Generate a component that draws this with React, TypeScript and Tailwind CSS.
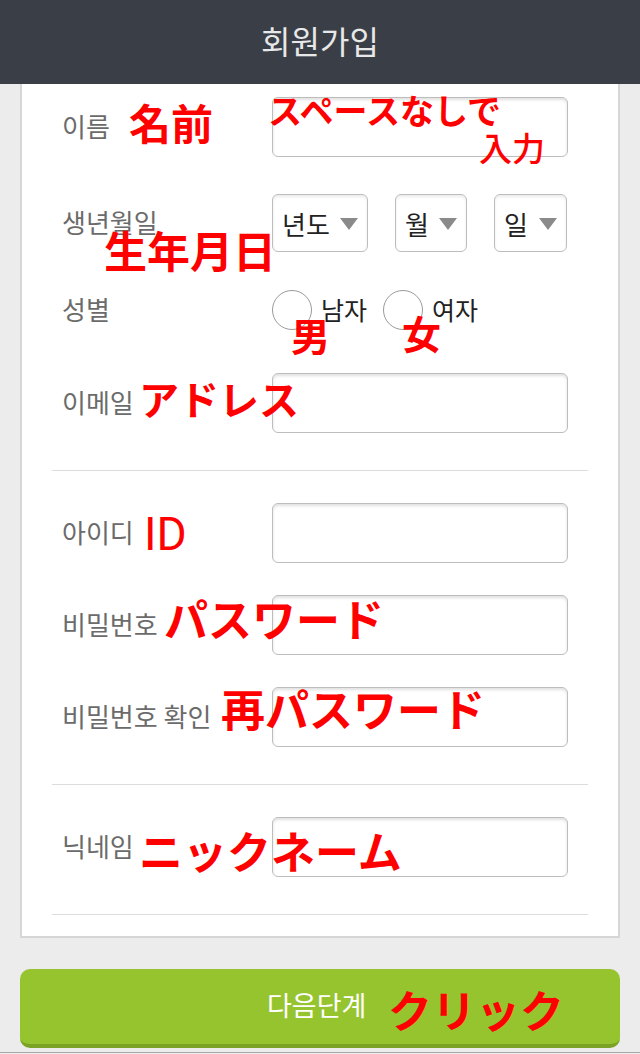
import React from 'react'

const kr = { fontFamily: '"Noto Sans CJK KR", "Noto Sans", sans-serif' }
const jp = { fontFamily: '"Noto Sans CJK JP", sans-serif' }

function Field() {
  return (
    <div className="h-[60px] w-[296px] rounded-md border border-[#bdbdbd] bg-white shadow-[inset_0_2px_3px_rgba(0,0,0,0.12)]" />
  )
}

function Select({ label, w }: { label: string; w: string }) {
  return (
    <div className={`${w} h-[58px] flex items-center justify-between pl-[9px] pr-[9px] rounded-md border border-[#bdbdbd] bg-white shadow-[inset_0_2px_3px_rgba(0,0,0,0.08)]`}>
      <span className="text-[26px] text-[#222]">{label}</span>
      <svg width="18" height="13" viewBox="0 0 18 13"><path d="M0 1h18L9 13z" fill="#8a8a8a" /></svg>
    </div>
  )
}

function Row({ label, children, h = 'h-[60px]' }: { label: string; children: React.ReactNode; h?: string }) {
  return (
    <div className={`${h} flex items-center pl-10`}>
      <div className="w-[210px] text-[26px] leading-none text-[#6b6b6b] whitespace-nowrap -mt-[2px]">{label}</div>
      {children}
    </div>
  )
}

function Radio({ label, w }: { label: string; w: string }) {
  return (
    <div className={`${w} flex items-center`}>
      <div className="w-10 h-10 shrink-0 rounded-full border border-[#9a9a9a] bg-white" />
      <span className="ml-[9px] -mt-[2px] text-[25px] leading-none text-[#222]">{label}</span>
    </div>
  )
}

function Divider() {
  return <div className="mx-[30px] h-px bg-[#dcdcdc]" />
}

// red hand annotations laid over the form
const notes: { t: string; x: number; y: number; s: string; w?: string }[] = [
  { t: '名前', x: 129, y: 101, s: 'text-[42px]' },
  { t: 'スペースなしで', x: 268, y: 93, s: 'text-[34px]' },
  { t: '入力', x: 479, y: 131, s: 'text-[33px]', w: 'font-medium' },
  { t: '生年月日', x: 104, y: 228, s: 'text-[43px]' },
  { t: '男', x: 291, y: 315, s: 'text-[39px]' },
  { t: '女', x: 402, y: 313, s: 'text-[39px]' },
  { t: 'アドレス', x: 139, y: 378, s: 'text-[40px]' },
  { t: 'パスワード', x: 164, y: 596, s: 'text-[44px]' },
  { t: '再パスワード', x: 221, y: 686, s: 'text-[44px]' },
  { t: 'ニックネーム', x: 139, y: 828, s: 'text-[44px]' },
  { t: 'クリック', x: 388, y: 987, s: 'text-[44px]' },
]

export default function App() {
  return (
    <div className="relative w-[640px] h-[1054px] bg-[#ececec] overflow-hidden" style={kr}>
      <header className="h-[84px] bg-[#3a3f47] flex items-center justify-center">
        <h1 className="text-[32px] text-[#e8e8e8] -mt-1">회원가입</h1>
      </header>

      <div className="mx-5 bg-white border-x-2 border-b-2 border-[#d6d6d6] pt-[13px] pb-[21px]">
        <Row label="이름"><Field /></Row>

        <div className="mt-[37px]">
          <Row label="생년월일" h="h-[58px]">
            <div className="flex gap-[27px]">
              <Select label="년도" w="w-[96px]" />
              <Select label="월" w="w-[72px]" />
              <Select label="일" w="w-[73px]" />
            </div>
          </Row>
        </div>

        <div className="mt-[38px]">
          <Row label="성별" h="h-[40px]">
            <div className="flex">
              <Radio label="남자" w="w-[111px]" />
              <Radio label="여자" w="w-[111px]" />
            </div>
          </Row>
        </div>

        <div className="mt-[43px] mb-[37px]">
          <Row label="이메일"><Field /></Row>
        </div>

        <Divider />

        <div className="mt-[32px] flex flex-col gap-[32px] mb-[37px]">
          <Row label="아이디"><Field /></Row>
          <Row label="비밀번호"><Field /></Row>
          <Row label="비밀번호 확인"><Field /></Row>
        </div>

        <Divider />

        <div className="mt-[32px] mb-[37px]">
          <Row label="닉네임"><Field /></Row>
        </div>

        <Divider />
      </div>

      <button className="mt-[31px] mx-5 w-[600px] h-[79px] rounded-[10px] bg-[#96c42f] border-b-4 border-[#7aa326] flex items-center justify-start pl-[247px]">
        <span className="text-[27px] leading-none text-white -mt-[4px]">다음단계</span>
      </button>
      <div className="mt-[4px] h-px bg-[#a8a8a8]" />

      <span className="absolute left-[144px] top-[511px] text-[46px] leading-none text-[#ff0000]" style={{ fontFamily: 'Roboto, sans-serif' }}>ID</span>

      {notes.map((n) => (
        <span
          key={n.t}
          className={`absolute ${n.s} ${n.w ?? 'font-bold'} leading-none text-[#ff0000] whitespace-nowrap`}
          style={{ ...jp, left: n.x, top: n.y }}
        >
          {n.t}
        </span>
      ))}
    </div>
  )
}
